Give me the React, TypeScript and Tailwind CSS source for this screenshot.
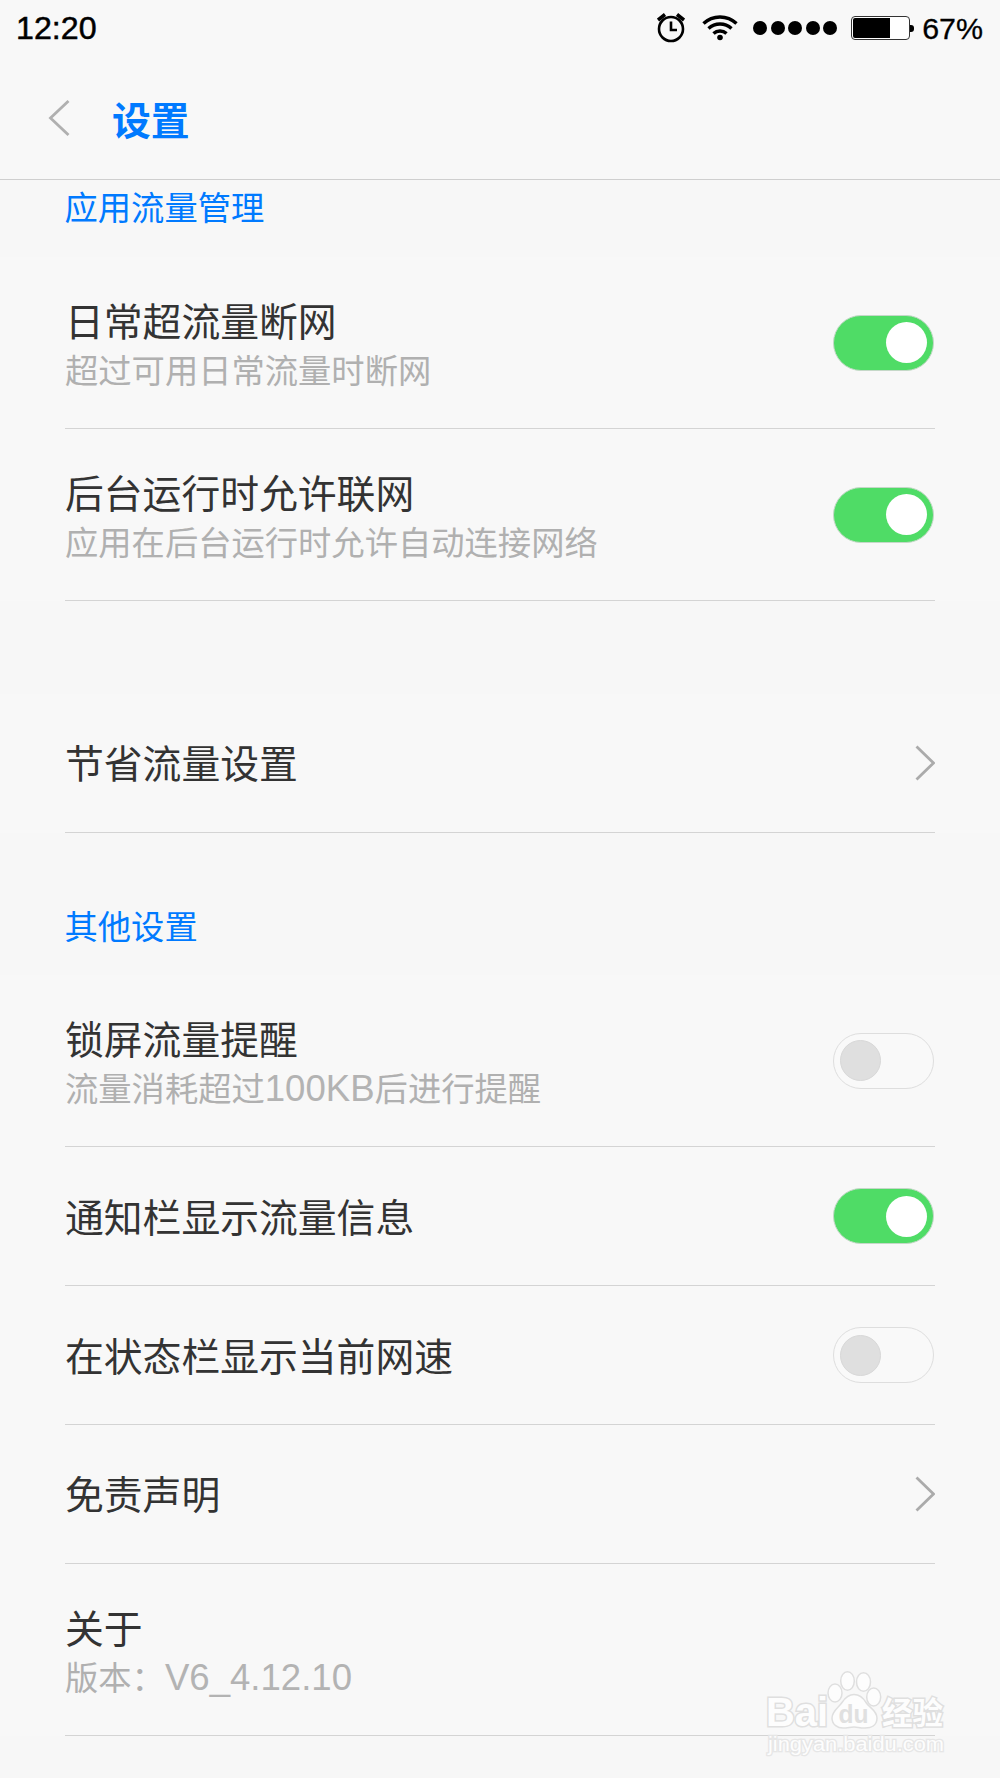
import type { ReactNode } from "react";

type Row = {
  id: string;
  title: string;
  detail?: ReactNode;
  control?: "on" | "off" | "link";
};

const appRows: Row[] = [
  { id: "daily", title: "日常超流量断网", detail: "超过可用日常流量时断网", control: "on" },
  { id: "background", title: "后台运行时允许联网", detail: "应用在后台运行时允许自动连接网络", control: "on" },
];

const saverRows: Row[] = [{ id: "saver", title: "节省流量设置", control: "link" }];

const otherRows: Row[] = [
  {
    id: "lock",
    title: "锁屏流量提醒",
    detail: (
      <>
        流量消耗超过<Latin>100KB</Latin>后进行提醒
      </>
    ),
    control: "off",
  },
  { id: "notification", title: "通知栏显示流量信息", control: "on" },
  { id: "speed", title: "在状态栏显示当前网速", control: "off" },
  { id: "disclaimer", title: "免责声明", control: "link" },
  {
    id: "about",
    title: "关于",
    detail: (
      <>
        版本：<Latin>V6_4.12.10</Latin>
      </>
    ),
  },
];

function Latin({ children }: { children: ReactNode }) {
  return <span className="font-['Liberation_Sans'] text-[36.6px] text-[#b3b3b3]">{children}</span>;
}

function Toggle({ on }: { on: boolean }) {
  return (
    <button
      role="switch"
      aria-checked={on}
      className={`mr-px flex h-14 w-[101px] shrink-0 items-center rounded-full border px-[6px] ${
        on ? "justify-end border-[#c5d8c8] bg-[#4fdc66]" : "justify-start border-[#dedede] bg-[#f9f9f9]"
      }`}
    >
      <span className={`size-[41px] rounded-full ${on ? "bg-white" : "border border-[#d8d8d8] bg-[#dfdfdf]"}`} />
    </button>
  );
}

function Chevron() {
  return (
    <svg className="h-9 w-5 shrink-0" viewBox="0 0 20 36" fill="none" stroke="#ababab" strokeWidth="2.8">
      <path d="M1.5 1.5 18.5 18 1.5 34.5" />
    </svg>
  );
}

function SettingRow({ row }: { row: Row }) {
  return (
    <div
      className={`flex items-center justify-between border-b border-[#d4d4d4] ${
        row.detail ? "h-[172.2px]" : "h-[138.9px]"
      }`}
    >
      <div className={row.detail ? "pt-[3px]" : "pb-[3px]"}>
        <div className="text-[38.8px] leading-[50px] text-[#333]">{row.title}</div>
        {row.detail && <div className="h-[50px] text-[33.3px] leading-[50px] text-[#b0b0b0]">{row.detail}</div>}
      </div>
      {row.control === "link" && <Chevron />}
      {(row.control === "on" || row.control === "off") && <Toggle on={row.control === "on"} />}
    </div>
  );
}

function Group({ rows }: { rows: Row[] }) {
  return (
    <div className="bg-[#f8f8f8] px-[65px]">
      {rows.map((row) => (
        <SettingRow key={row.id} row={row} />
      ))}
    </div>
  );
}

function StatusBar() {
  return (
    <div className="flex h-[57px] items-center justify-between pr-[17px] pl-4 font-['Liberation_Sans'] text-black">
      <span className="text-[32.2px] [-webkit-text-stroke:0.5px_#000]">12:20</span>
      <div className="flex items-center">
        <svg className="h-[30px] w-7" viewBox="0 0 28 30" fill="none" stroke="#000" strokeWidth="2.6">
          <circle cx="14" cy="16" r="12" />
          <path d="M14 8.5V17h6" />
          <path d="M1 7 8 1.5M27 7 20 1.5" strokeWidth="3.6" />
        </svg>
        <svg className="ml-[17px] h-[26px] w-9" viewBox="0 0 36 26" fill="none" stroke="#000" strokeWidth="3.4">
          <path d="M1.5 8.5a24 24 0 0 1 33 0M6.5 13.500a17 17 0 0 1 23 0M11.500 18.500a9.500 9.500 0 0 1 13 0" />
          <circle cx="18" cy="22.5" r="2.8" fill="#000" stroke="none" />
        </svg>
        <div className="ml-[15px] flex gap-[3.5px]">
          {[0, 1, 2, 3, 4].map((i) => (
            <span key={i} className="size-[14px] rounded-full bg-black" />
          ))}
        </div>
        <div className="ml-[14px] h-6 w-[59px] rounded-[4px] border border-[#333] bg-white p-px">
          <div className="h-full w-[37px] rounded-l-[2px] bg-black" />
        </div>
        <div className="mr-[8px] h-[7px] w-1 rounded-r-[3px] bg-black" />
        <span className="text-[30.4px] [-webkit-text-stroke:0.3px_#000]">67%</span>
      </div>
    </div>
  );
}

function Watermark() {
  return (
    <svg
      className="absolute top-[1666px] left-[764px] h-[94px] w-[190px]"
      viewBox="0 0 190 94"
      fill="#fdfdfd"
      stroke="#dfdfdf"
      strokeWidth="1.5"
    >
      <text
        x="2"
        y="60"
        fontSize="40"
        textLength="62"
        lengthAdjust="spacingAndGlyphs"
        paintOrder="stroke"
        strokeWidth="3"
        className="font-['Liberation_Sans'] font-bold"
      >
        Bai
      </text>
      <ellipse cx="71" cy="27" rx="7" ry="9" />
      <ellipse cx="83.5" cy="15" rx="6.8" ry="9.3" />
      <ellipse cx="99.5" cy="16" rx="7" ry="9.3" />
      <ellipse cx="109.7" cy="31" rx="7" ry="9" />
      <path d="M90 28.5c6 0 9 3 12 8s11 8 11 15.500-6 10-12 10-7-1-11-1-6 1-11 1-11-3-11-10 7-11 10-15.500 6-8 12-8Z" />
      <text
        x="74.5"
        y="57"
        fontSize="26"
        textLength="30"
        lengthAdjust="spacingAndGlyphs"
        fill="#e0e0e0"
        stroke="none"
        className="font-['Liberation_Sans'] font-bold"
      >
        du
      </text>
      <text
        x="118"
        y="58"
        fontSize="30.5"
        paintOrder="stroke"
        strokeWidth="3"
        className="font-['Noto_Sans_CJK_SC'] font-bold"
      >
        经验
      </text>
      <text
        x="4"
        y="85"
        fontSize="20"
        textLength="176"
        lengthAdjust="spacingAndGlyphs"
        paintOrder="stroke"
        strokeWidth="2.5"
        stroke="#e6e6e6"
        className="font-['Liberation_Sans']"
      >
        jingyan.baidu.com
      </text>
    </svg>
  );
}

export default function App() {
  return (
    <div className="relative h-[1778px] w-[1000px] overflow-hidden bg-[#f7f7f7] font-['Noto_Sans_CJK_SC',sans-serif]">
      <header className="h-[180px] border-b border-[#cfcfcf] bg-[#f8f8f8]">
        <StatusBar />
        <div className="flex h-[122px] items-center pl-[48px]">
          <svg className="h-9 w-[22px]" viewBox="0 0 22 36" fill="none" stroke="#b0b0b0" strokeWidth="2.8">
            <path d="M20.5 1 2.5 18l18 17" />
          </svg>
          <h1 className="ml-[42px] text-[38.8px] font-bold text-[#007aff]">设置</h1>
        </div>
      </header>
      <main>
        <h2 className="h-[77px] px-[64.5px] text-[33.3px] leading-[52px] text-[#007aff]">应用流量管理</h2>
        <Group rows={appRows} />
        <div className="h-[92.3px]" />
        <Group rows={saverRows} />
        <h2 className="h-[142.5px] px-[64.5px] pt-[67px] text-[33.3px] leading-[50px] text-[#007aff]">其他设置</h2>
        <Group rows={otherRows} />
      </main>
      <Watermark />
    </div>
  );
}
